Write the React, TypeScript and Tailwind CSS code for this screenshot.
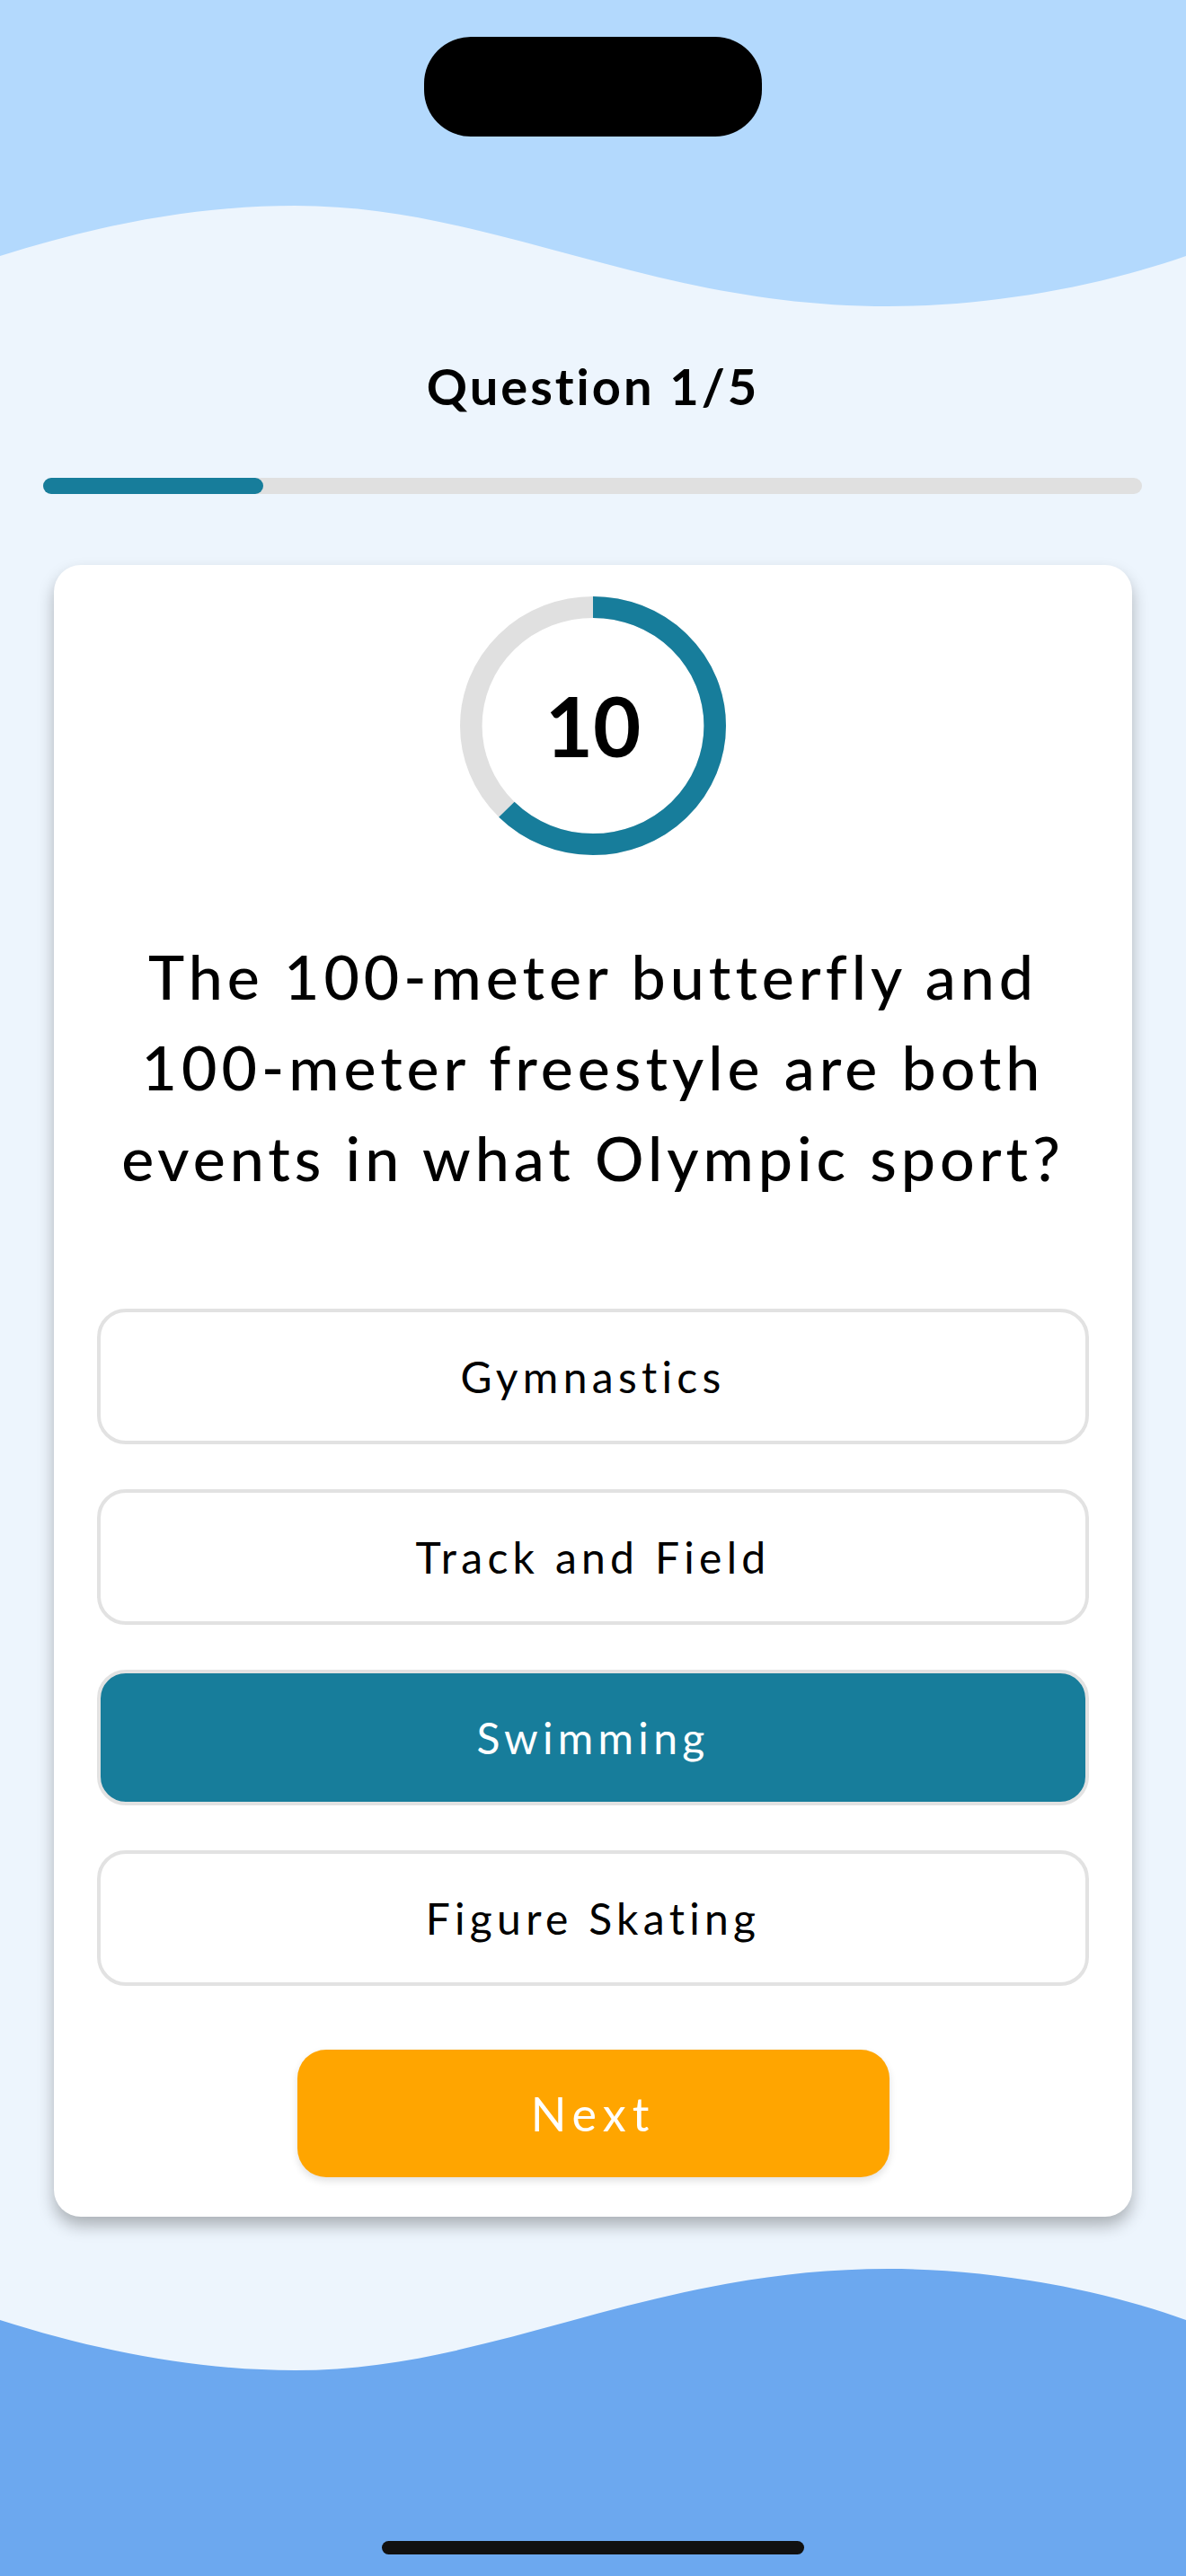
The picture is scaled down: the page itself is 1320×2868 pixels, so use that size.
import React, { useState } from 'react';

const options = ['Gymnastics', 'Track and Field', 'Swimming', 'Figure Skating'];

const TimerRing: React.FC<{ value: number; total: number }> = ({ value, total }) => {
  const r = 45.85;
  const c = 2 * Math.PI * r;
  const filled = (value / total) * c;

  return (
    <div className="relative mx-auto h-[296px] w-[288px]">
      <svg
        className="h-full w-full -rotate-90"
        viewBox="0 0 100 100"
        preserveAspectRatio="none"
      >
        <circle cx="50" cy="50" r={r} fill="none" stroke="#e0e0e0" strokeWidth="8.3" />
        <circle
          cx="50"
          cy="50"
          r={r}
          fill="none"
          stroke="#177d9b"
          strokeWidth="8.3"
          strokeDasharray={`${filled} ${c}`}
        />
      </svg>
      <div className="absolute inset-0 flex items-center justify-center">
        <span className="text-[92px] font-bold leading-none text-black">{value}</span>
      </div>
    </div>
  );
};

const App: React.FC = () => {
  const [selected, setSelected] = useState(2);

  return (
    <main
      className="relative h-[2868px] w-full overflow-hidden bg-[#edf5fd]"
      style={{ fontFamily: 'Lato, "Open Sans", sans-serif' }}
    >
      {/* top wave */}
      <svg
        className="absolute left-0 top-0 h-[345px] w-full"
        viewBox="0 0 1320 345"
        preserveAspectRatio="none"
      >
        <path
          d="M0 285 C110 250 220 229 328 229 C550 229 720 341 989 341 C1100 341 1220 320 1320 285 V0 H0 Z"
          fill="#b3d9fd"
        />
      </svg>

      {/* bottom wave */}
      <svg
        className="absolute bottom-0 left-0 h-[348px] w-full"
        viewBox="0 0 1320 348"
        preserveAspectRatio="none"
      >
        <path
          d="M0 63 C110 98 220 119 328 119 C550 119 720 6 989 6 C1100 6 1220 27 1320 63 V348 H0 Z"
          fill="#6ca8ef"
        />
      </svg>

      {/* dynamic island */}
      <div className="absolute left-[472px] top-[41px] h-[111px] w-[376px] rounded-[52px] bg-black" />

      <div className="relative flex flex-col pt-[398px]">
        <h1 className="text-center text-[56px] font-bold leading-[64px] tracking-[3px] text-black">
          Question 1/5
        </h1>

        <div className="ml-[48px] mr-[49px] mt-[70px] h-[18px] rounded-full bg-[#e0e0e0]">
          <div className="h-full w-[20%] rounded-full bg-[#177d9b]" />
        </div>

        <div className="mx-[60px] mt-[79px] flex flex-col rounded-[30px] bg-white px-[48px] pb-[44px] pt-[31px] shadow-[0_10px_18px_rgba(0,0,0,0.28)]">
          <TimerRing value={10} total={16} />

          <p className="mt-[80px] text-center text-[68px] font-medium leading-[101px] tracking-[5px] text-black">
            The 100-meter butterfly and
            <br />
            100-meter freestyle are both
            <br />
            events in what Olympic sport?
          </p>

          <div className="mt-[118px] flex flex-col gap-[50px]">
            {options.map((opt, i) => (
              <button
                key={opt}
                onClick={() => setSelected(i)}
                className={
                  i === selected
                    ? 'flex h-[151px] items-center justify-center rounded-[32px] border-4 border-[#e2e2e2] bg-[#177d9b] text-[48px] tracking-[5.3px] text-white'
                    : 'flex h-[151px] items-center justify-center rounded-[32px] border-4 border-[#e2e2e2] bg-white text-[48px] tracking-[5.3px] text-black'
                }
              >
                {opt}
              </button>
            ))}
          </div>

          <button className="mx-auto mt-[71px] flex h-[142px] w-[659px] items-center justify-center rounded-[32px] bg-[#ffa500] text-[52px] tracking-[7px] text-white shadow-[0_4px_8px_rgba(0,0,0,0.12)]">
            Next
          </button>
        </div>
      </div>

      {/* home indicator */}
      <div className="absolute bottom-[24px] left-[425px] h-[15px] w-[470px] rounded-full bg-[#111111]" />
    </main>
  );
};

export default App;
